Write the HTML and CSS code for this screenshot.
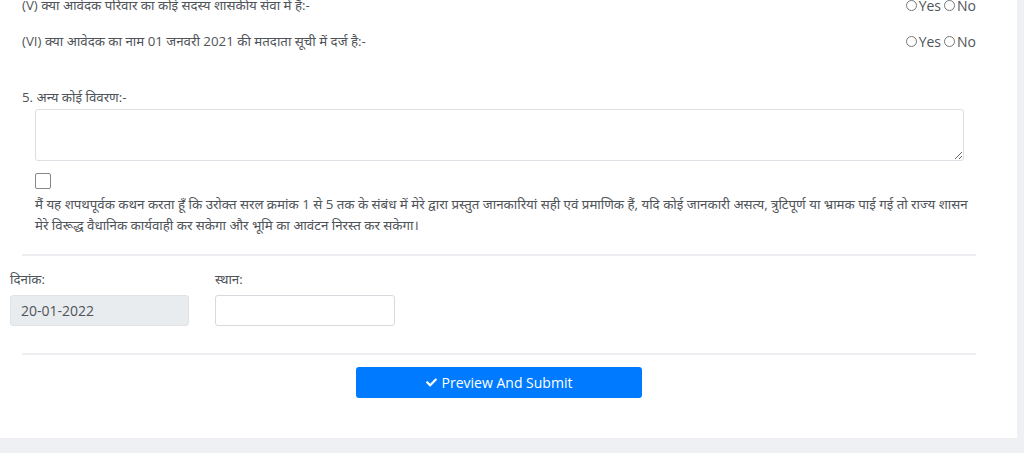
FILE: index.html
```html
<!DOCTYPE html>
<html lang="hi">
<head>
<meta charset="utf-8">
<link rel="stylesheet" href="styles.css">
</head>
<body>
<div class="card">
  <div class="q-row first">
    <span>(V) क्या आवेदक परिवार का कोई सदस्य शासकीय सेवा में है:-</span>
    <span class="radios"><span class="radio"></span>Yes<span class="radio"></span>No</span>
  </div>
  <div class="q-row">
    <span>(VI) क्या आवेदक का नाम 01 जनवरी 2021 की मतदाता सूची में दर्ज है:-</span>
    <span class="radios"><span class="radio"></span>Yes<span class="radio"></span>No</span>
  </div>
  <div class="other-label">5. अन्य कोई विवरण:-</div>
  <div class="indent">
    <textarea class="textarea"></textarea>
    <span class="checkbox"></span>
    <p class="declaration">मैं यह शपथपूर्वक कथन करता हूँ कि उरोक्त सरल क्रमांक 1 से 5 तक के संबंध में मेरे द्वारा प्रस्तुत जानकारियां सही एवं प्रमाणिक हैं, यदि कोई जानकारी असत्य, त्रुटिपूर्ण या भ्रामक पाई गई तो राज्य शासन मेरे विरूद्ध वैधानिक कार्यवाही कर सकेगा और भूमि का आवंटन निरस्त कर सकेगा।</p>
  </div>
  <hr class="rule">
  <div class="fields">
    <div class="field">
      <label class="field-label">दिनांक:</label>
      <div class="input readonly">20-01-2022</div>
    </div>
    <div class="field">
      <label class="field-label">स्थान:</label>
      <div class="input"></div>
    </div>
  </div>
  <hr class="rule second">
  <div class="actions">
    <button class="btn"><svg class="check" viewBox="0 0 512 512" width="11" height="11"><path fill="#fff" d="M173.9 439.4l-166.4-166.4c-10-10-10-26.2 0-36.2l36.2-36.2c10-10 26.2-10 36.2 0L192 312.7 432.1 72.6c10-10 26.2-10 36.2 0l36.2 36.2c10 10 10 26.2 0 36.2l-294.4 294.4c-10 10-26.2 10-36.2 0z"/></svg>Preview And Submit</button>
  </div>
</div>
</body>
</html>
```

FILE: styles.css
```css
html, body {
  margin: 0;
  padding: 0;
  background: #eff0f3;
}
body {
  font-family: "Open Sans", "Noto Sans", sans-serif;
  font-size: 13.3px;
  color: #4f5459;
}
.card {
  width: 1017px;
  height: 438px;
  background: #fff;
  overflow: hidden;
}
.q-row {
  display: flex;
  justify-content: space-between;
  align-items: center;
  height: 36px;
  padding: 0 41px 0 22px;
}
.q-row.first {
  margin-top: -13px;
}
.radios {
  display: flex;
  align-items: center;
  font-size: 14px;
}
.radio {
  width: 9px;
  height: 9px;
  border: 1px solid #777;
  border-radius: 50%;
  margin: 0 2px 0 3px;
}
.other-label {
  margin-top: 28px;
  padding-left: 22px;
  line-height: 20px;
}
.indent {
  padding-left: 35px;
  padding-right: 38px;
}
.textarea {
  display: block;
  box-sizing: border-box;
  width: 929px;
  height: 52px;
  margin: 2px 0 0;
  border: 1px solid #dcdfe3;
  border-radius: 3px;
  resize: vertical;
}
.checkbox {
  display: block;
  box-sizing: border-box;
  width: 16px;
  height: 16px;
  margin-top: 12px;
  border: 1px solid #888;
  border-radius: 2px;
}
.declaration {
  margin: 5px 0 0;
  line-height: 21px;
}
.rule {
  margin: 18px 41px 0 22px;
  border: 0;
  border-top: 2px solid #eceef1;
}
.rule.second {
  margin-top: 27px;
}
.fields {
  display: flex;
  gap: 26px;
  padding-left: 10px;
  margin-top: 13px;
}
.field {
  display: flex;
  flex-direction: column;
}
.field-label {
  line-height: 20px;
  margin-bottom: 6px;
}
.input {
  box-sizing: border-box;
  width: 180px;
  height: 31px;
  border: 1px solid #d6dade;
  border-radius: 3px;
  padding: 0 10px;
  line-height: 29px;
  font-size: 14px;
}
.input.readonly {
  width: 179px;
  background: #e9ecef;
  border-color: #dfe2e6;
}
.actions {
  display: flex;
  justify-content: center;
  padding: 12px 41px 0 22px;
}
.btn {
  display: flex;
  align-items: center;
  justify-content: center;
  gap: 5px;
  width: 286px;
  height: 31px;
  border: 0;
  border-radius: 3px;
  background: #007bff;
  color: #fff;
  font-family: "Open Sans", sans-serif;
  font-size: 14px;
}
```
